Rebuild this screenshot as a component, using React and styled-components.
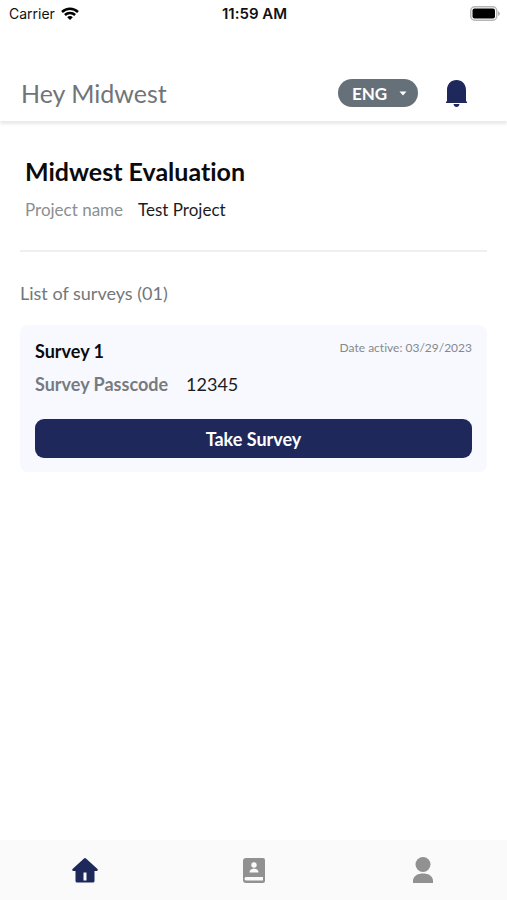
import React from 'react';
import styled, { createGlobalStyle } from 'styled-components';

const GlobalStyle = createGlobalStyle`
	* {
		box-sizing: border-box;
	}
	body {
		margin: 0;
		background: #fff;
		font-family: Lato, sans-serif;
		font-variant-ligatures: none;
	}
	h1, h2, p, dl, dt, dd {
		margin: 0;
	}
`;

const Screen = styled.div`
	display: flex;
	flex-direction: column;
	min-height: 100vh;
`;

const StatusBar = styled.div`
	display: grid;
	grid-template-columns: 1fr auto 1fr;
	align-items: center;
	height: 27px;
	padding: 0 7px 0 9px;
	font-family: Inter, sans-serif;
	font-size: 14px;
	color: #111;
`;

const Carrier = styled.div`
	display: flex;
	align-items: center;
	gap: 6px;
`;

const Clock = styled.div`
	font-size: 15px;
	font-weight: 600;
`;

const Battery = styled.svg`
	justify-self: end;
`;

const Header = styled.header`
	display: flex;
	align-items: center;
	height: 94px;
	padding: 38px 40px 0 21px;
	box-shadow: 0 3px 3px rgba(0, 0, 0, 0.09);
`;

const Greeting = styled.p`
	flex: 1;
	font-size: 25px;
	line-height: 32px;
	color: #6f7579;
`;

const LanguagePicker = styled.label`
	position: relative;
	width: 80px;
	margin-right: 28px;
	svg {
		position: absolute;
		top: 12px;
		right: 11px;
		pointer-events: none;
	}
`;

const LanguageSelect = styled.select`
	appearance: none;
	display: block;
	width: 100%;
	height: 28px;
	padding: 0 14px;
	border: 0;
	border-radius: 14px;
	background: #667079;
	color: #fff;
	font-family: inherit;
	font-size: 17px;
	font-weight: 700;
`;

const IconButton = styled.button`
	display: flex;
	padding: 0;
	border: 0;
	background: none;
	color: #1f285b;
`;

const Main = styled.main`
	flex: 1;
	padding: 33px 20px;
`;

const Project = styled.section`
	padding: 0 5px 28px;
	border-bottom: 2px solid #efefef;
`;

const ProjectTitle = styled.h1`
	margin-bottom: 10px;
	font-size: 25px;
	line-height: 34px;
	color: #0b0b0d;
`;

const Detail = styled.dl`
	display: flex;
	gap: ${(props) => props.$gap};
	font-size: ${(props) => (props.$strong ? '18px' : '17px')};
	line-height: 24px;
	dt {
		color: ${(props) => props.$labelColor};
		font-weight: ${(props) => (props.$strong ? 700 : 400)};
	}
	dd {
		color: #1c1c1e;
	}
`;

const ListTitle = styled.h2`
	margin: 29px 0 20px;
	font-size: 18px;
	font-weight: 400;
	line-height: 24px;
	color: #72777a;
`;

const Card = styled.article`
	padding: 14px 15px;
	border-radius: 8px;
	background: #f7f9ff;
`;

const CardTop = styled.div`
	display: flex;
	justify-content: space-between;
	margin-bottom: 9px;
`;

const CardTitle = styled.h2`
	font-size: 18px;
	line-height: 24px;
	color: #0b0b0d;
`;

const ActiveDate = styled.p`
	font-size: 12px;
	line-height: 17px;
	color: #85898d;
`;

const TakeButton = styled.button`
	display: block;
	width: 100%;
	height: 39px;
	margin-top: 23px;
	border: 0;
	border-radius: 9px;
	background: #1f285b;
	color: #fff;
	font-family: inherit;
	font-size: 18px;
	font-weight: 700;
`;

const TabBar = styled.nav`
	display: grid;
	grid-template-columns: repeat(3, 1fr);
	height: 60px;
	background: #fafafa;
`;

const Tab = styled.a`
	display: flex;
	align-items: center;
	justify-content: center;
	color: ${(props) => (props.$active ? '#1f285b' : '#919191')};
`;

const WifiIcon = () => (
	<svg width='18' height='14' viewBox='0 0 18 14' fill='none' stroke='#000' strokeWidth='2.5'>
		<path d='M1 5C5.500 .6 12.500 .6 17 5' />
		<path d='M3.900 8C6.700 5.200 11.300 5.200 14.100 8' />
		<path d='M6.200 10.300C7.800 8.700 10.200 8.700 11.800 10.300L9 13.100Z' fill='#000' stroke='none' />
	</svg>
);

const BatteryIcon = () => (
	<Battery width='30' height='15' viewBox='0 0 30 15'>
		<rect x='.75' y='.75' width='26' height='13.500' rx='4' fill='#fff' stroke='#b5b5b5' strokeWidth='1.500' />
		<rect x='2.500' y='2.500' width='22.500' height='10' rx='2' fill='#000' />
		<path d='M28 5Q30 6 30 7.500T28 10Z' fill='#b5b5b5' />
	</Battery>
);

const BellIcon = () => (
	<svg width='21' height='27' viewBox='0 0 21 27' fill='currentColor'>
		<path d='M0 23V21.500H1V10C1 4 5 0 10.500 0S20 4 20 10V21.500H21V23Z' />
		<path d='M7.500 24H13.500Q13 27 10.500 27T7.500 24Z' />
	</svg>
);

const HomeIcon = () => (
	<svg width='26' height='25' viewBox='0 0 26 25' fill='currentColor'>
		<path d='M12 .5Q13 -.3 14 .5L25.500 11Q26.300 13 24.500 13H22.500V23Q22.500 24.500 21 24.500H5Q3.500 24.500 3.500 23V13H1.500Q-.3 13 .5 11Z' />
		<path d='M11.500 14.500H14.500V22.500H11.500Z' fill='#fafafa' />
	</svg>
);

const ContactsIcon = () => (
	<svg width='22' height='25' viewBox='0 0 22 25' fill='currentColor'>
		<path d='M3 0H20Q22 0 22 2V23Q22 25 20 25H3Q0 25 0 22V3Q0 0 3 0Z' />
		<path d='M3 19H20V22.500H3Q1.500 22.500 1.500 20.750T3 19Z' fill='#fafafa' />
		<circle cx='11' cy='7' r='2.700' fill='#fafafa' />
		<path d='M6.500 14.500Q6.500 11 11 10.500Q15.500 11 15.500 14.500Z' fill='#fafafa' />
	</svg>
);

const PersonIcon = () => (
	<svg width='20' height='26' viewBox='0 0 20 26' fill='currentColor'>
		<circle cx='10' cy='7.500' r='7.500' />
		<path d='M0 26V23C1 18.500 5 16.500 10 16.500S19 18.500 20 23V26Z' />
	</svg>
);

const tabs = [
	{ name: 'Home', icon: HomeIcon, active: true },
	{ name: 'Contacts', icon: ContactsIcon },
	{ name: 'Profile', icon: PersonIcon },
];

const SurveyCard = ({ survey }) => (
	<Card>
		<CardTop>
			<CardTitle>{survey.title}</CardTitle>
			<ActiveDate>Date active: {survey.date}</ActiveDate>
		</CardTop>
		<Detail $gap='18px' $labelColor='#777b80' $strong>
			<dt>Survey Passcode</dt>
			<dd>{survey.passcode}</dd>
		</Detail>
		<TakeButton type='button'>Take Survey</TakeButton>
	</Card>
);

const App = () => (
	<Screen>
		<GlobalStyle />
		<StatusBar>
			<Carrier>
				Carrier
				<WifiIcon />
			</Carrier>
			<Clock>11:59 AM</Clock>
			<BatteryIcon />
		</StatusBar>
		<Header>
			<Greeting>Hey Midwest</Greeting>
			<LanguagePicker>
				<LanguageSelect aria-label='Language'>
					<option>ENG</option>
				</LanguageSelect>
				<svg width='8' height='5' viewBox='0 0 8 5' fill='#fff'>
					<path d='M.5 .5H7.500L4 4.500Z' />
				</svg>
			</LanguagePicker>
			<IconButton type='button' aria-label='Notifications'>
				<BellIcon />
			</IconButton>
		</Header>
		<Main>
			<Project>
				<ProjectTitle>Midwest Evaluation</ProjectTitle>
				<Detail $gap='15px' $labelColor='#8b8f92'>
					<dt>Project name</dt>
					<dd>Test Project</dd>
				</Detail>
			</Project>
			<ListTitle>List of surveys (01)</ListTitle>
			<SurveyCard survey={{ title: 'Survey 1', date: '03/29/2023', passcode: '12345' }} />
		</Main>
		<TabBar>
			{tabs.map(({ name, icon: Icon, active }) => (
				<Tab key={name} href='#' aria-label={name} $active={active}>
					<Icon />
				</Tab>
			))}
		</TabBar>
	</Screen>
);

export default App;
